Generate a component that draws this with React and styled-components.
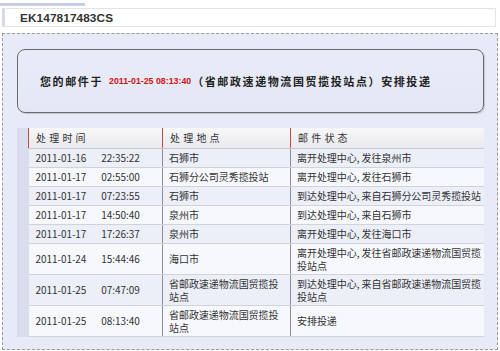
import styled, { createGlobalStyle } from "styled-components";

const GlobalStyle = createGlobalStyle`
  html, body {
    margin: 0;
    padding: 0;
    background: #ffffff;
  }
  body {
    font-family: "Noto Sans CJK SC", "Liberation Sans", sans-serif;
    color: #333333;
  }
`;

const Page = styled.div`
  width: 500px;
  height: 351px;
  padding-top: 3px;
  box-sizing: border-box;
  overflow: hidden;
`;

const TopTab = styled.div`
  width: 85px;
  height: 3px;
  background: #c9cde6;
`;

const MailHeader = styled.div`
  margin: 2px 4px 0 2px;
  height: 17px;
  display: flex;
  align-items: center;
  padding-left: 15px;
  border: 1px solid #e4e4e8;
  border-left: 3px solid #d6d9ee;
  background: #ffffff;
  font-family: "Liberation Sans", Arial, sans-serif;
  font-weight: bold;
  font-size: 11.8px;
  color: #333333;
  letter-spacing: 0.1px;
`;

const Panel = styled.div`
  margin: 6px 2px 0 2px;
  border: 1px dashed #9a9a9a;
  background: #e8ebf7;
  padding: 15px 13px 12px 14px;
`;

const Notice = styled.div`
  height: 62px;
  border: 1px solid #6b6b6b;
  border-radius: 8px;
  background: linear-gradient(#e9ecf8, #e3e6f4);
  box-shadow: 1px 1px 1px #c3c6d8;
  display: flex;
  align-items: center;
  padding-left: 22px;
  font-size: 11px;
  font-weight: bold;
  letter-spacing: 1.6px;
  color: #222222;
  white-space: nowrap;
`;

const DateStamp = styled.span`
  font-family: "Liberation Sans", Arial, sans-serif;
  font-size: 8.8px;
  letter-spacing: 0;
  color: #d01414;
  margin: 0 1px 0 6px;
`;

const TableWrap = styled.div`
  margin-top: 15px;
  padding-left: 11px;
  background: #dadded;
`;

const Table = styled.table`
  width: 455px;
  border-collapse: collapse;
  table-layout: fixed;
  font-size: 10px;
  color: #333333;
  border-bottom: 1px solid #9a9a9a;
`;

const HeadCell = styled.th`
  box-sizing: border-box;
  width: ${({ $w }) => $w}px;
  height: 20px;
  padding: 0 0 0 7px;
  text-align: left;
  font-weight: normal;
  letter-spacing: 3.2px;
  border-left: 1px solid #c84848;
  background: linear-gradient(#f7f7f9, #e9e9ee);
  border-bottom: 1px solid #c9c9d2;
`;

const Row = styled.tr`
  background: ${({ $odd }) => ($odd ? "#eceef8" : "#f7f8fd")};
`;

const Cell = styled.td`
  height: ${({ $tall }) => ($tall ? 30 : 18)}px;
  padding: 0 ${({ $padRight }) => $padRight || 0}px 0
    ${({ $first }) => ($first ? 7 : 6)}px;
  line-height: 13px;
  letter-spacing: -0.05px;
  vertical-align: middle;
  border-bottom: 1px solid #d0d2dc;
  border-left: ${({ $first }) => ($first ? "none" : "1px solid #8d8d95")};
  word-break: break-all;
`;

const Time = styled.span`
  margin-left: 15px;
`;

const rows = [
  ["2011-01-16", "22:35:22", "石狮市", "离开处理中心, 发往泉州市"],
  ["2011-01-17", "02:55:00", "石狮分公司灵秀揽投站", "离开处理中心, 发往石狮市"],
  ["2011-01-17", "07:23:55", "石狮市", "到达处理中心, 来自石狮分公司灵秀揽投站"],
  ["2011-01-17", "14:50:40", "泉州市", "到达处理中心, 来自石狮市"],
  ["2011-01-17", "17:26:37", "泉州市", "离开处理中心, 发往海口市"],
  ["2011-01-24", "15:44:46", "海口市", "离开处理中心, 发往省邮政速递物流国贸揽投站点", true],
  ["2011-01-25", "07:47:09", "省邮政速递物流国贸揽投站点", "到达处理中心, 来自省邮政速递物流国贸揽投站点", true],
  ["2011-01-25", "08:13:40", "省邮政速递物流国贸揽投站点", "安排投递", true],
];

export default function App() {
  return (
    <Page>
      <GlobalStyle />
      <TopTab />
      <MailHeader>EK147817483CS</MailHeader>
      <Panel>
        <Notice>
          您的邮件于
          <DateStamp>2011-01-25 08:13:40</DateStamp>
          （省邮政速递物流国贸揽投站点）安排投递
        </Notice>
        <TableWrap>
          <Table>
            <thead>
              <tr>
                <HeadCell $w={134}>处理时间</HeadCell>
                <HeadCell $w={128}>处理地点</HeadCell>
                <HeadCell $w={193}>邮件状态</HeadCell>
              </tr>
            </thead>
            <tbody>
              {rows.map(([date, time, place, status, tall], i) => (
                <Row key={i} $odd={i % 2 === 0}>
                  <Cell $first $tall={tall}>
                    {date}
                    <Time>{time}</Time>
                  </Cell>
                  <Cell $tall={tall} $padRight={5}>
                    {place}
                  </Cell>
                  <Cell $tall={tall}>{status}</Cell>
                </Row>
              ))}
            </tbody>
          </Table>
        </TableWrap>
      </Panel>
    </Page>
  );
}
